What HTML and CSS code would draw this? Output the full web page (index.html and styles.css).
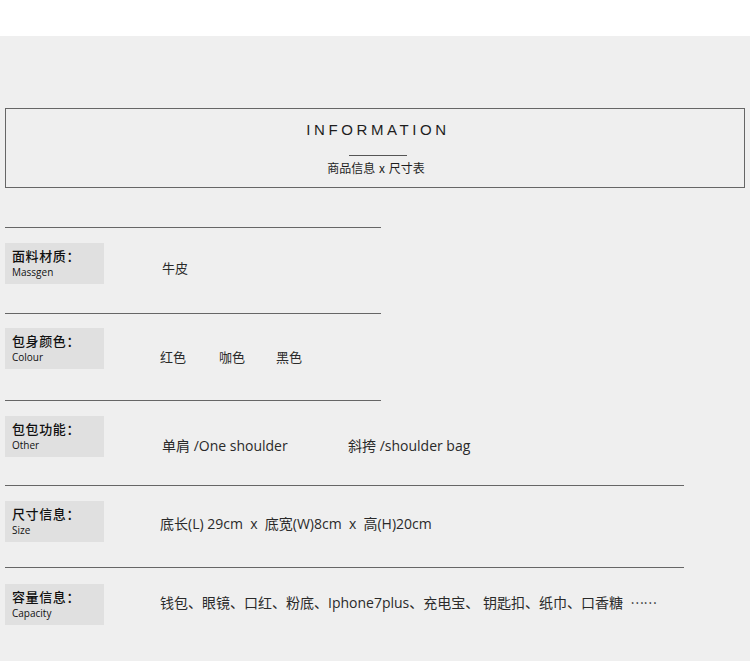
FILE: index.html
```html
<!DOCTYPE html>
<html lang="zh">
<head>
<meta charset="utf-8">
<title>Information</title>
<link rel="stylesheet" href="styles.css">
</head>
<body>
<div class="top"></div>
<section class="panel">
  <header class="head">
    <h1 class="title">INFORMATION</h1>
    <div class="short-rule"></div>
    <p class="sub">商品信息 x 尺寸表</p>
  </header>

  <div class="item i1">
    <div class="sep"></div>
    <div class="row">
      <div class="label"><div class="cn">面料材质：</div><div class="en">Massgen</div></div>
      <div class="value v1"><span>牛皮</span></div>
    </div>
  </div>

  <div class="item i2">
    <div class="sep"></div>
    <div class="row">
      <div class="label"><div class="cn">包身颜色：</div><div class="en">Colour</div></div>
      <div class="value v2 colors"><span>红色</span><span>咖色</span><span>黑色</span></div>
    </div>
  </div>

  <div class="item i3">
    <div class="sep"></div>
    <div class="row">
      <div class="label"><div class="cn">包包功能：</div><div class="en">Other</div></div>
      <div class="value v3 funcs"><span class="f1">单肩 /One shoulder</span><span>斜挎 /shoulder bag</span></div>
    </div>
  </div>

  <div class="item i4">
    <div class="sep long"></div>
    <div class="row">
      <div class="label"><div class="cn">尺寸信息：</div><div class="en">Size</div></div>
      <div class="value v4"><span>底长(L) 29cm &nbsp;x &nbsp;底宽(W)8cm &nbsp;x &nbsp;高(H)20cm</span></div>
    </div>
  </div>

  <div class="item i5">
    <div class="sep long"></div>
    <div class="row">
      <div class="label"><div class="cn">容量信息：</div><div class="en">Capacity</div></div>
      <div class="value v5"><span>钱包、眼镜、口红、粉底、Iphone7plus、充电宝、 钥匙扣、纸巾、口香糖 &nbsp;<span class="dots">……</span></span></div>
    </div>
  </div>
</section>
</body>
</html>
```

FILE: styles.css
```css
html, body {
  margin: 0;
  padding: 0;
  background: #ffffff;
  font-family: "Noto Sans CJK SC", "Noto Sans", "DejaVu Sans", sans-serif;
  color: #222;
}

.top {
  height: 36px;
  background: #ffffff;
}

.panel {
  background: #efefef;
  height: 625px;
  padding-top: 72px;
  box-sizing: border-box;
  overflow: hidden;
}

.head {
  margin: 0 5px;
  height: 80px;
  box-sizing: border-box;
  border: 1px solid #666;
  display: flex;
  flex-direction: column;
  align-items: center;
}

.title {
  margin: 11px 0 0 6px;
  font-family: "Liberation Sans", "DejaVu Sans", sans-serif;
  font-weight: 400;
  font-size: 15px;
  line-height: 20px;
  letter-spacing: 3.6px;
  color: #1e1e1e;
}

.short-rule {
  width: 58px;
  height: 1px;
  background: #555;
  margin: 15px 0 0 6px;
}

.sub {
  margin: 3px 0 0 2px;
  font-size: 12px;
  line-height: 18px;
  color: #1e1e1e;
  word-spacing: 1px;
}

.item {
  box-sizing: border-box;
}
.item.i1 { margin-top: 39px; height: 86px; }
.item.i2 { height: 87px; }
.item.i3 { height: 85px; }
.item.i4 { height: 82px; }

.sep {
  height: 1px;
  width: 376px;
  margin-left: 5px;
  background: #666;
}
.sep.long { width: 679px; }

.row {
  display: flex;
  margin-top: 15px;
  margin-left: 5px;
}
.i2 .row { margin-top: 14px; }
.i5 .row { margin-top: 16px; }

.label {
  width: 99px;
  height: 41px;
  background: #e0e0e0;
  box-sizing: border-box;
  padding: 4px 0 0 7px;
  flex-shrink: 0;
}

.cn {
  font-size: 13px;
  line-height: 18px;
  font-weight: 500;
  color: #111;
  letter-spacing: 0.6px;
}

.en {
  font-family: "Open Sans", "Noto Sans", sans-serif;
  font-size: 10px;
  line-height: 14px;
  color: #111;
  margin-top: 0;
}

.value {
  margin-left: 56px;
  font-family: "Open Sans", "Noto Sans CJK SC", sans-serif;
  font-size: 14px;
  line-height: 18px;
  color: #2a2a2a;
  white-space: nowrap;
}
.v1 { padding-top: 16px; margin-left: 58px; font-size: 13px; }
.v2 { padding-top: 20px; font-size: 13px; }
.v3 { padding-top: 21px; margin-left: 58px; }
.v4 { padding-top: 14px; }
.v5 { padding-top: 9px; }

.colors span { margin-right: 33px; }
.colors span:nth-child(2) { margin-right: 31px; }

.funcs .f1 { display: inline-block; width: 186px; }

.dots { font-family: "Noto Sans CJK SC", sans-serif; letter-spacing: -1px; }
```
